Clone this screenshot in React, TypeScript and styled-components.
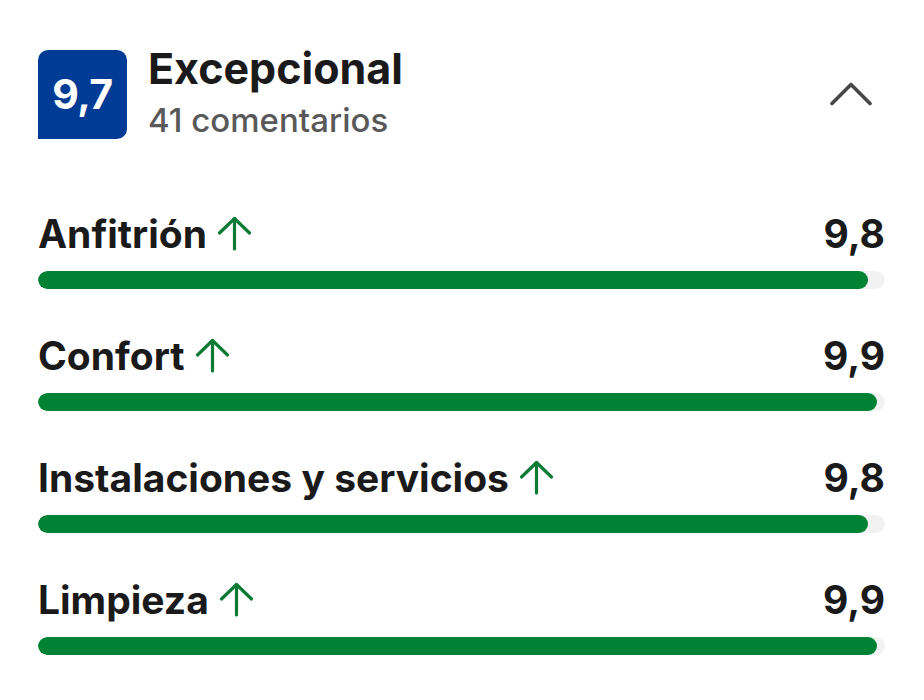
import React from 'react';
import styled, { createGlobalStyle } from 'styled-components';

const GlobalStyle = createGlobalStyle`
  body {
    margin: 0;
    background: #ffffff;
    font-family: Inter, "Liberation Sans", Arial, sans-serif;
    color: #1a1a1a;
  }
`;

const Page = styled.div`
  padding: 50px 39px 0 38px;
  width: 924px;
  height: 700px;
  box-sizing: border-box;
  overflow: hidden;
`;

const Header = styled.div`
  align-items: center;
  display: flex;
`;

const ScoreBadge = styled.div`
  align-items: center;
  background: #003b95;
  border-radius: 10px 10px 10px 0;
  color: #ffffff;
  display: flex;
  flex: none;
  font-size: 41px;
  font-weight: 700;
  height: 89px;
  justify-content: center;
  letter-spacing: -0.5px;
  padding-bottom: 2px;
  box-sizing: border-box;
  width: 89px;
`;

const HeaderText = styled.div`
  display: flex;
  flex: 1;
  flex-direction: column;
  margin-left: 21px;
`;

const Title = styled.div`
  font-size: 43px;
  font-weight: 700;
  line-height: 44px;
  margin-top: -6px;
`;

const Subtitle = styled.div`
  color: #595959;
  font-size: 33px;
  font-weight: 500;
  line-height: 36px;
  margin-top: 12px;
`;

const Toggle = styled.div`
  display: flex;
  margin: -2px 12px 0 0;
`;

const List = styled.div`
  display: flex;
  flex-direction: column;
  gap: 44px;
  margin-top: 72px;
`;

const Row = styled.div`
  display: flex;
  flex-direction: column;
`;

const LabelLine = styled.div`
  align-items: center;
  display: flex;
  height: 44px;
  justify-content: space-between;
`;

const Label = styled.div`
  align-items: center;
  display: flex;
  font-size: 39px;
  font-weight: 700;
  gap: 10px;
`;

const Value = styled.div`
  font-size: 39px;
  font-weight: 700;
`;

const Track = styled.div`
  background: #f2f2f2;
  border-radius: 9px;
  height: 18px;
  margin-top: 16px;
  overflow: hidden;
`;

const Fill = styled.div`
  background: #008234;
  border-radius: 9px;
  height: 100%;
`;

const ArrowUp = () => (
  <svg width="35" height="35" viewBox="0 0 35 35" fill="none" stroke="#0b7a35" strokeWidth="3.2" strokeLinecap="round" strokeLinejoin="round">
    <path d="M17.5 33 V2.5" />
    <path d="M2.5 17 L17.5 2.5 L32.5 17" />
  </svg>
);

const ChevronUp = () => (
  <svg width="44" height="24" viewBox="0 0 44 24" fill="none" stroke="#474747" strokeWidth="3.6" strokeLinecap="round" strokeLinejoin="round">
    <path d="M3 21.5 L22 2.5 L41 21.5" />
  </svg>
);

const scores = [
  { name: 'Anfitrión', value: 9.8 },
  { name: 'Confort', value: 9.9 },
  { name: 'Instalaciones y servicios', value: 9.8 },
  { name: 'Limpieza', value: 9.9 },
];

const formatScore = (value: number) => value.toFixed(1).replace('.', ',');

const App = () => {
  return (
    <>
      <GlobalStyle />
      <Page>
        <Header>
          <ScoreBadge>9,7</ScoreBadge>
          <HeaderText>
            <Title>Excepcional</Title>
            <Subtitle>41 comentarios</Subtitle>
          </HeaderText>
          <Toggle><ChevronUp /></Toggle>
        </Header>
        <List>
          {scores.map((score) => (
            <Row key={score.name}>
              <LabelLine>
                <Label>{score.name}<ArrowUp /></Label>
                <Value>{formatScore(score.value)}</Value>
              </LabelLine>
              <Track>
                <Fill style={{ width: `${score.value * 10}%` }} />
              </Track>
            </Row>
          ))}
        </List>
      </Page>
    </>
  );
};

export default App;
